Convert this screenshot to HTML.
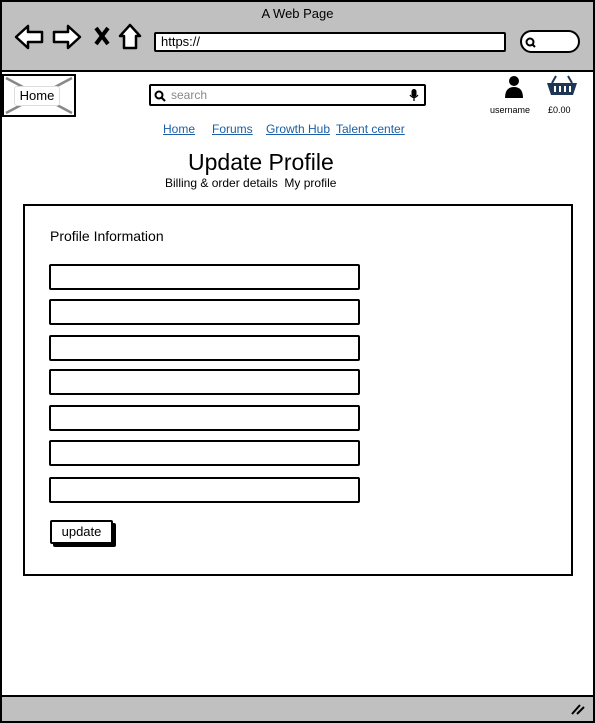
<!DOCTYPE html>
<html><head><style>
body{margin:0;width:595px;height:723px;position:relative;font-family:"Liberation Sans",sans-serif;background:#fff;overflow:hidden}
.a{position:absolute;box-sizing:border-box}
.in{border:2px solid #000;border-radius:2px;background:#fff}
a{color:#1a5fa8;text-decoration:underline;position:absolute;font-size:12px}
</style></head><body>
<div class="a" style="left:0;top:0;width:595px;height:723px;border:2px solid #000"></div>
<div class="a" style="left:2px;top:2px;width:591px;height:70px;background:#c0c0c0;border-bottom:2px solid #000"></div>
<div class="a" style="left:0;top:6px;width:595px;text-align:center;font-size:13px">A Web Page</div>
<svg class="a" style="left:14px;top:22px" width="130" height="30" viewBox="0 0 130 30" fill="#fff" stroke="#000" stroke-width="2.5" stroke-linejoin="round">
<path d="M2 15 L14 4 L14 10 L28 10 L28 20 L14 20 L14 26 Z"/>
<path d="M66 15 L54 4 L54 10 L40 10 L40 20 L54 20 L54 26 Z"/>
<path d="M82 6 L94 22 M94 6 L82 22" stroke-width="4"/>
<path d="M106 14 L116 3 L126 14 L122 14 L122 26 L110 26 L110 14 Z"/>
</svg>
<div class="a in" style="left:154px;top:32px;width:352px;height:20px;font-size:13px;padding-left:5px;line-height:16px">https://</div>
<div class="a in" style="left:520px;top:30px;width:60px;height:23px;border-radius:12px"></div>
<svg class="a" style="left:524px;top:36px" width="14" height="12"><circle cx="6" cy="6" r="3.5" fill="none" stroke="#000" stroke-width="2"/><path d="M8 8 L11 11" stroke="#000" stroke-width="2"/></svg>
<div class="a" style="left:2px;top:74px;width:74px;height:43px;border:2px solid #000;background:#fff"></div>
<svg class="a" style="left:4px;top:76px" width="70" height="39"><path d="M2 2 L68 37 M68 2 L2 37" stroke="#888" stroke-width="2.5"/></svg>
<div class="a" style="left:14px;top:86px;width:46px;height:20px;background:#fff;border:1px solid #ddd;border-radius:3px;font-size:13px;text-align:center;line-height:18px">Home</div>
<div class="a in" style="left:149px;top:84px;width:277px;height:22px"></div>
<svg class="a" style="left:154px;top:90px" width="12" height="12"><circle cx="5" cy="5" r="3.5" fill="none" stroke="#000" stroke-width="2"/><path d="M7.5 7.5 L11 11" stroke="#000" stroke-width="2"/></svg>
<div class="a" style="left:171px;top:88px;font-size:12px;color:#888">search</div>
<svg class="a" style="left:409px;top:88px" width="10" height="14"><rect x="2.5" y="1" width="5" height="8" rx="2.5"/><path d="M1 7 Q5 12 9 7 M5 10 L5 13" stroke="#000" fill="none" stroke-width="1.3"/></svg>
<svg class="a" style="left:504px;top:75px" width="20" height="24"><circle cx="10" cy="6" r="5"/><path d="M1 23 Q1 12 10 12 Q19 12 19 23 Z"/></svg>
<div class="a" style="left:490px;top:105px;font-size:9px">username</div>
<svg class="a" style="left:546px;top:75px" width="32" height="22"><path d="M10 1 L6 8 M22 1 L26 8" stroke="#1f3556" stroke-width="2"/><path d="M1 8 L31 8 L27 20 L5 20 Z" fill="#1f3556"/><path d="M9 11 L9 17 M14 11 L14 17 M19 11 L19 17 M24 11 L24 17" stroke="#fff" stroke-width="2"/></svg>
<div class="a" style="left:548px;top:105px;font-size:9px">£0.00</div>
<a style="left:163px;top:122px">Home</a>
<a style="left:212px;top:122px">Forums</a>
<a style="left:266px;top:122px">Growth Hub</a>
<a style="left:336px;top:122px">Talent center</a>
<div class="a" style="left:188px;top:149px;font-size:23px">Update Profile</div>
<div class="a" style="left:165px;top:176px;font-size:12px">Billing &amp; order details&nbsp; My profile</div>
<div class="a" style="left:23px;top:204px;width:550px;height:372px;border:2px solid #000"></div>
<div class="a" style="left:50px;top:228px;font-size:14px">Profile Information</div>
<div class="a in" style="left:49px;top:264px;width:311px;height:26px"></div>
<div class="a in" style="left:49px;top:299px;width:311px;height:26px"></div>
<div class="a in" style="left:49px;top:335px;width:311px;height:26px"></div>
<div class="a in" style="left:49px;top:369px;width:311px;height:26px"></div>
<div class="a in" style="left:49px;top:405px;width:311px;height:26px"></div>
<div class="a in" style="left:49px;top:440px;width:311px;height:26px"></div>
<div class="a in" style="left:49px;top:477px;width:311px;height:26px"></div>
<div class="a in" style="left:50px;top:520px;width:63px;height:24px;font-size:13px;text-align:center;line-height:20px;box-shadow:3px 3px 0 #000">update</div>
<div class="a" style="left:2px;top:695px;width:591px;height:26px;background:#c0c0c0;border-top:2px solid #000"></div>
<svg class="a" style="left:570px;top:702px" width="16" height="14"><path d="M2 12 L10 3 M7 12 L14 5" stroke="#000" stroke-width="2"/></svg>
</body></html>
